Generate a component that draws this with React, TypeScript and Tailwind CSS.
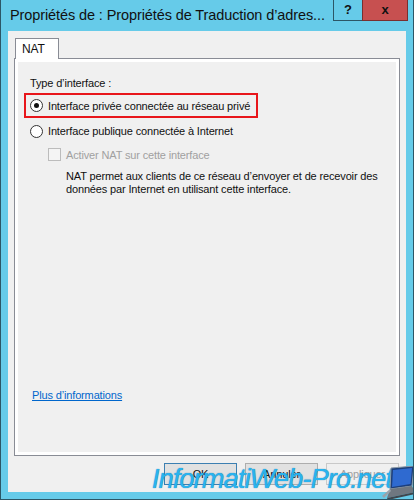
import React from "react";

const ui = { fontFamily: '"Liberation Sans", Arial, sans-serif' };

function Radio({ checked }: { checked?: boolean }) {
  return (
    <span className="w-[13px] h-[13px] rounded-full border border-[#333] bg-white flex items-center justify-center shrink-0">
      {checked && <span className="w-[5px] h-[5px] rounded-full bg-[#111]" />}
    </span>
  );
}

function Laptop() {
  return (
    <svg width="34" height="34" viewBox="0 0 34 34">
      <polygon points="10,2 33,0 31,20 9,23" fill="#1d3f7a" stroke="#8a9aa8" strokeWidth="1" />
      <polygon points="12,4 31,2 29.5,18 11,21" fill="#2f6ad0" />
      <polygon points="9,23 31,20 34,26 6,32" fill="#6f7780" />
      <polygon points="6,32 34,26 34,28 7,34" fill="#40464d" />
      <polygon points="1,30 9,23 10,25 3,32" fill="#9aa3ab" />
    </svg>
  );
}

export default function App() {
  return (
    <div
      className="w-[414px] h-[500px] bg-[#66cbe9] border-l border-r border-b border-[#2c5666] flex flex-col relative overflow-hidden"
      style={ui}
    >
      {/* title bar */}
      <div className="h-[31px] flex items-start">
        <span className="pl-[9px] pt-[6px] text-[14.5px] leading-[18px] tracking-[-0.1px] text-[#111] whitespace-nowrap flex-1">
          Propriétés de : Propriétés de Traduction d’adres...
        </span>
        <div className="flex mr-[5px]">
          <div className="w-[29px] h-[21px] border-l border-b border-[#2c5666] flex items-center justify-center text-[13px] font-bold text-[#111]">
            ?
          </div>
          <div className="w-[46px] h-[21px] bg-[#c75050] border-b border-l border-r border-[#7a2f2f] flex items-center justify-center text-[13px] font-bold text-[#111]">
            x
          </div>
        </div>
      </div>

      {/* client */}
      <div className="flex-1 mx-[7px] mb-[7px] bg-[#f0f0f0] px-[6px] pt-[7px] pb-[7px] flex flex-col text-[11px] tracking-[-0.15px] text-[#111]">
        <div className="flex">
          <div className="ml-[1px] w-[44px] h-[21px] bg-white border-t border-l border-r border-[#898c95] relative z-10 pl-[6px] pt-[3px] leading-[14px] text-[12px]">
            NAT
          </div>
        </div>
        <div className="-mt-px h-[398px] border border-[#898c95] bg-white p-[3px]">
          <div className="h-full bg-[#f0f0f0] flex flex-col">
            <div className="mt-[14px] pl-[12px] leading-[14px]">Type d’interface :</div>

            <div className="mt-[3px] ml-[6px] w-[234px] h-[25px] border-2 border-[#e8161b] pl-[4px] flex items-center gap-[5px]">
              <Radio checked />
              <span className="leading-[14px] whitespace-nowrap">Interface privée connectée au réseau privé</span>
            </div>

            <div className="mt-[6px] pl-[12px] flex items-center gap-[5px] h-[14px]">
              <Radio />
              <span className="leading-[14px]">Interface publique connectée à Internet</span>
            </div>

            <div className="mt-[10px] pl-[30px] flex items-center gap-[5px] h-[13px]">
              <span className="w-[13px] h-[13px] border border-[#bcbcbc] bg-[#f4f4f4] shrink-0" />
              <span className="leading-[14px] text-[#a0a0a0]">Activer NAT sur cette interface</span>
            </div>

            <p className="mt-[9px] pl-[48px] leading-[13px] whitespace-nowrap">
              NAT permet aux clients de ce réseau d’envoyer et de recevoir des
              <br />
              données par Internet en utilisant cette interface.
            </p>

            <div className="mt-auto mb-[50px] pl-[14px] leading-[14px]">
              <span className="text-[#0066cc] underline">Plus d’informations</span>
            </div>
          </div>
        </div>

        <div className="mt-[7px] flex justify-end gap-[8px] mr-[1px]">
          <div className="w-[73px] h-[22px] bg-[#e1e1e1] border border-[#3c7fb1] flex items-center justify-center">OK</div>
          <div className="w-[73px] h-[22px] bg-[#e1e1e1] border border-[#adadad] flex items-center justify-center">Annuler</div>
          <div className="w-[73px] h-[22px] bg-[#f0f0f0] border border-[#c9c9c9] flex items-center justify-center text-[#a0a0a0]">
            Appliquer
          </div>
        </div>
      </div>

      {/* watermark */}
      <div className="absolute left-[151px] top-[466px]">
        <span
          className="italic text-[27px] leading-none tracking-[-0.8px] text-[#2ab3ee] whitespace-nowrap"
          style={{ textShadow: "0 0 1px #0b6fa8" }}
        >
          InformatiWeb-Pro.net
        </span>
      </div>
      <div className="absolute left-[380px] top-[466px]">
        <Laptop />
      </div>
    </div>
  );
}
